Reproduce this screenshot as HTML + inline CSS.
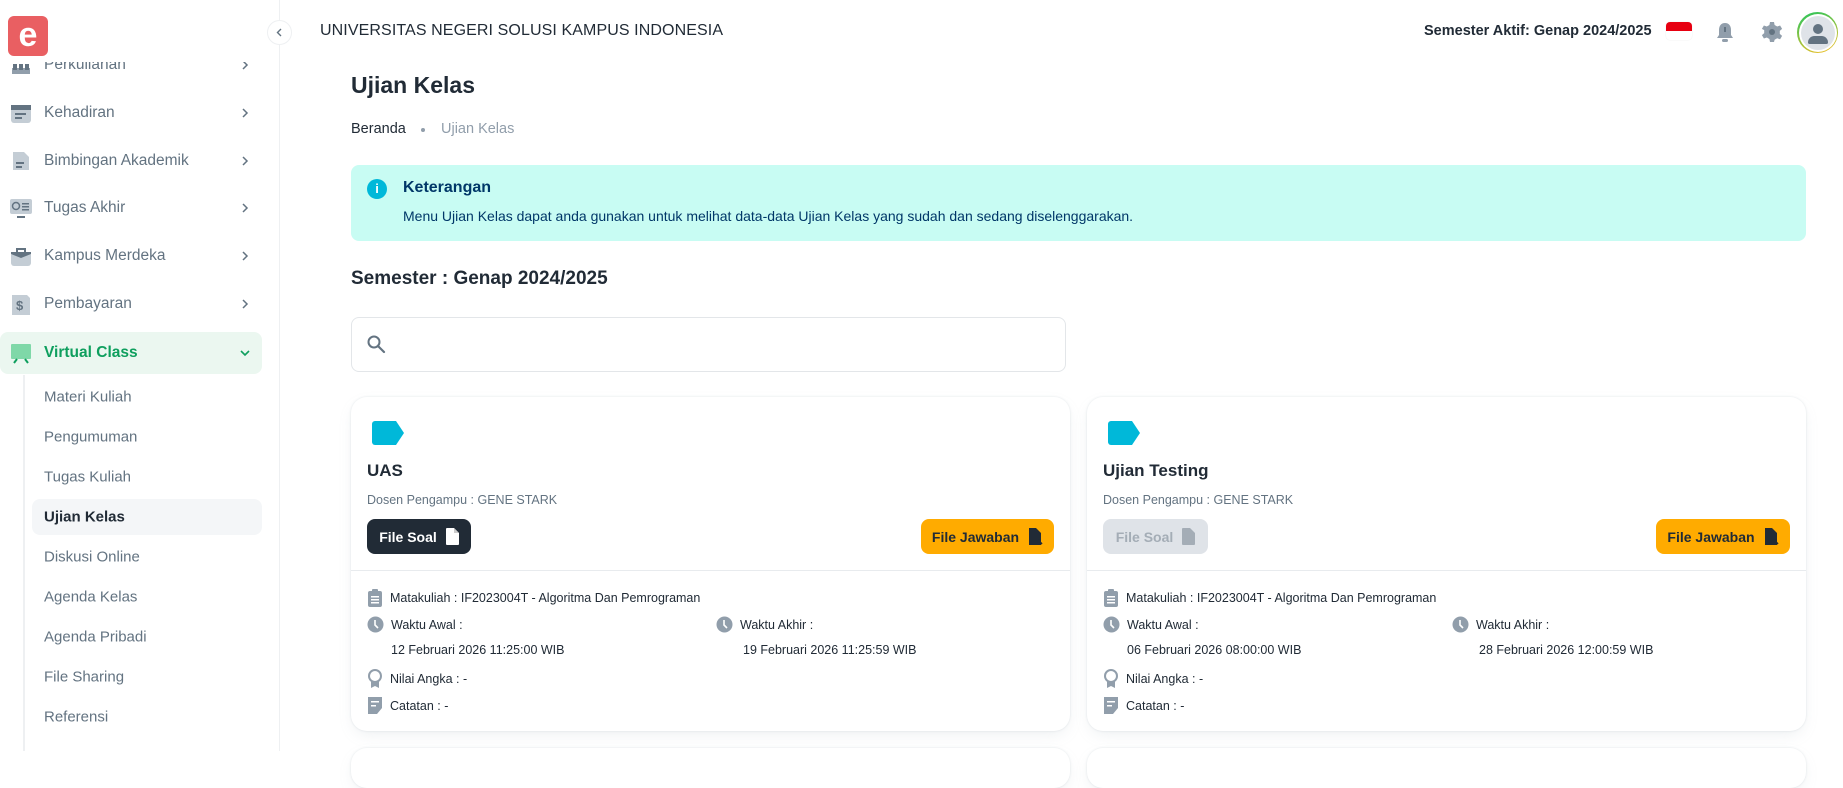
<!DOCTYPE html>
<html><head><meta charset="utf-8">
<style>
*{box-sizing:border-box;margin:0;padding:0}
body{width:1843px;height:751px;overflow:hidden;background:#fff;font-family:"Liberation Sans",sans-serif;color:#212b36;position:relative}
.abs{position:absolute}
.side{position:absolute;left:0;top:0;width:280px;height:751px;border-right:1px solid #eef0f2;background:#fff;overflow:hidden}
.mi{position:absolute;left:0;width:262px;height:42px;display:flex;align-items:center;font-size:15.5px;color:#637381}
.mi .ic{position:absolute;left:10px;top:10px;width:22px;height:22px}
.mi .tx{position:absolute;left:44px}
.mi .ch{position:absolute;left:240px;top:13px;width:10px;height:16px}
.si{position:absolute;left:44px;font-size:15px;color:#637381;transform:translateY(-50%)}
.card{position:absolute;top:397px;width:719px;height:334px;border-radius:16px;background:#fff;box-shadow:0 0 2px rgba(145,158,171,.25),0 6px 16px -4px rgba(145,158,171,.18)}
.tag{position:absolute;left:21px;top:24px}
.ct{position:absolute;left:16px;top:64px;font-size:17px;font-weight:600}
.dp{position:absolute;left:16px;top:96px;font-size:12.5px;color:#637381}
.btn{position:absolute;top:122px;height:35px;border-radius:8px;font-size:14px;font-weight:700;display:flex;align-items:center;justify-content:center;gap:9px}
.hr{position:absolute;left:0;right:0;top:173px;border-top:1px solid #e8ebee}
.row{position:absolute;font-size:12.5px;color:#212b36;display:flex;align-items:center;gap:7px}
</style></head><body>

<div class="side">
  <div class="mi" style="top:44px;"><svg class="ic" viewBox="0 0 22 22"><rect x="2" y="14" width="18" height="6" fill="#919eab"/><rect x="3" y="10" width="4" height="6" fill="#637381"/><rect x="9" y="10" width="4" height="6" fill="#637381"/><rect x="15" y="10" width="4" height="6" fill="#637381"/></svg><span class="tx">Perkuliahan</span><svg class="ch" viewBox="0 0 10 16"><path d="M3 4l4 4-4 4" stroke="#637381" stroke-width="1.5" fill="none"/></svg></div>
  <div class="abs" style="left:0;top:0;width:279px;height:62px;background:#fff"></div>
  <div class="abs" style="left:8px;top:16px;width:40px;height:40px;background:#e95f62;border-radius:6px;color:#fff;font:bold 34px 'Liberation Sans',sans-serif;text-align:center;line-height:38px">e</div>

  <div class="mi" style="top:92px"><svg class="ic" viewBox="0 0 22 22"><rect x="1" y="3" width="20" height="18" rx="3" fill="#c4cdd5"/><rect x="1" y="3" width="20" height="5" fill="#637381"/><rect x="5" y="11" width="11" height="2" fill="#637381"/><rect x="5" y="15" width="7" height="2" fill="#637381"/></svg><span class="tx">Kehadiran</span><svg class="ch" viewBox="0 0 10 16"><path d="M3 4l4 4-4 4" stroke="#637381" stroke-width="1.5" fill="none"/></svg></div>
  <div class="mi" style="top:140px"><svg class="ic" viewBox="0 0 22 22"><path d="M3 2h11l5 5v13H3z" fill="#c4cdd5"/><rect x="6" y="12" width="8" height="2" fill="#637381"/><rect x="6" y="16" width="6" height="2" fill="#637381"/></svg><span class="tx">Bimbingan Akademik</span><svg class="ch" viewBox="0 0 10 16"><path d="M3 4l4 4-4 4" stroke="#637381" stroke-width="1.5" fill="none"/></svg></div>
  <div class="mi" style="top:187px"><svg class="ic" viewBox="0 0 22 22"><rect x="0" y="2" width="22" height="15" rx="2" fill="#c4cdd5"/><circle cx="6" cy="9" r="3.5" fill="none" stroke="#637381" stroke-width="1.5"/><rect x="12" y="6" width="7" height="1.5" fill="#637381"/><rect x="12" y="9" width="7" height="1.5" fill="#637381"/><rect x="12" y="12" width="7" height="1.5" fill="#637381"/><rect x="7" y="19" width="8" height="2" fill="#637381"/></svg><span class="tx">Tugas Akhir</span><svg class="ch" viewBox="0 0 10 16"><path d="M3 4l4 4-4 4" stroke="#637381" stroke-width="1.5" fill="none"/></svg></div>
  <div class="mi" style="top:235px"><svg class="ic" viewBox="0 0 22 22"><rect x="1" y="7" width="20" height="14" rx="3" fill="#c4cdd5"/><path d="M1 9l10 4 10-4V7H1z" fill="#637381"/><path d="M7 7V4h8v3" fill="none" stroke="#637381" stroke-width="2"/></svg><span class="tx">Kampus Merdeka</span><svg class="ch" viewBox="0 0 10 16"><path d="M3 4l4 4-4 4" stroke="#637381" stroke-width="1.5" fill="none"/></svg></div>
  <div class="mi" style="top:283px"><svg class="ic" viewBox="0 0 22 22"><path d="M2 2h15l3 3v17H2z" fill="#c4cdd5"/><text x="6" y="17" font-size="13" font-weight="bold" fill="#637381" font-family="Liberation Sans">$</text></svg><span class="tx">Pembayaran</span><svg class="ch" viewBox="0 0 10 16"><path d="M3 4l4 4-4 4" stroke="#637381" stroke-width="1.5" fill="none"/></svg></div>
  <div class="mi" style="top:332px;background:#ebf7f0;border-radius:8px;color:#0e9f5e;font-weight:600"><svg class="ic" viewBox="0 0 22 22"><rect x="1" y="2" width="20" height="15" rx="1" fill="#7fd8a8"/><path d="M4 21l3-4M18 21l-3-4" stroke="#0e9f5e" stroke-width="2"/></svg><span class="tx">Virtual Class</span><svg class="ch" style="left:238px;width:14px" viewBox="0 0 14 16"><path d="M3 6l4 4 4-4" stroke="#0e9f5e" stroke-width="1.6" fill="none"/></svg></div>

  <div class="abs" style="left:23px;top:375px;width:2px;height:376px;background:#eef0f2"></div>
  <div class="abs" style="left:32px;top:499px;width:230px;height:36px;background:#f4f6f8;border-radius:8px"></div>
  <div class="si" style="top:397px">Materi Kuliah</div>
  <div class="si" style="top:437px">Pengumuman</div>
  <div class="si" style="top:477px">Tugas Kuliah</div>
  <div class="si" style="top:517px;color:#212b36;font-weight:600">Ujian Kelas</div>
  <div class="si" style="top:557px">Diskusi Online</div>
  <div class="si" style="top:597px">Agenda Kelas</div>
  <div class="si" style="top:637px">Agenda Pribadi</div>
  <div class="si" style="top:677px">File Sharing</div>
  <div class="si" style="top:717px">Referensi</div>
</div>
<div class="abs" style="left:267px;top:20px;width:25px;height:25px;border:1px solid #eef0f2;border-radius:50%;background:#fff"><svg width="23" height="23" viewBox="0 0 23 23"><path d="M13 8l-3.5 3.5L13 15" stroke="#637381" stroke-width="1.4" fill="none"/></svg></div>

<div class="abs" style="left:320px;top:22px;font-size:16px;font-weight:500;letter-spacing:.1px">UNIVERSITAS NEGERI SOLUSI KAMPUS INDONESIA</div>
<div class="abs" style="left:1424px;top:23px;font-size:14.5px;font-weight:600">Semester Aktif: Genap 2024/2025</div>
<div class="abs" style="left:1666px;top:22px;width:26px;height:18px;border-radius:4px;overflow:hidden;box-shadow:0 0 1px #ddd"><div style="height:9px;background:#e70011"></div></div>
<svg class="abs" style="left:1714px;top:21px" width="22" height="22" viewBox="0 0 22 22"><path d="M11 2c4 0 6 3 6 7v5l2 3H3l2-3V9c0-4 2-7 6-7z" fill="#919eab"/><rect x="10" y="6" width="2" height="5" fill="#637381"/><rect x="8" y="18" width="6" height="3" rx="1.5" fill="#919eab"/></svg>
<svg class="abs" style="left:1761px;top:21px" width="22" height="22" viewBox="0 0 22 22"><path d="M9 1h4l.6 3 2.6 1.5 2.9-1 2 3.4-2.3 2v3l2.3 2-2 3.4-2.9-1-2.6 1.5L13 21H9l-.6-3-2.6-1.5-2.9 1-2-3.4 2.3-2v-3L.9 7.9l2-3.4 2.9 1L8.4 4z" fill="#919eab"/><circle cx="11" cy="11" r="3" fill="#637381"/></svg>
<div class="abs" style="left:1797px;top:12px;width:41px;height:41px;border-radius:50%;background:linear-gradient(160deg,#22c55e,#fbbf24);padding:1.5px"><div style="width:100%;height:100%;border-radius:50%;background:#fff;padding:2px"><div style="width:100%;height:100%;border-radius:50%;background:#dfe3e8;position:relative"><div class="abs" style="left:12px;top:8px;width:10px;height:10px;border-radius:50%;background:#637381"></div><div class="abs" style="left:7px;top:20px;width:20px;height:8px;border-radius:8px 8px 2px 2px;background:#637381"></div></div></div></div>

<div class="abs" style="left:351px;top:72px;font-size:23px;font-weight:700">Ujian Kelas</div>
<div class="abs" style="left:351px;top:121px;font-size:14.5px">Beranda</div>
<div class="abs" style="left:421px;top:128px;width:4px;height:4px;border-radius:50%;background:#919eab"></div>
<div class="abs" style="left:441px;top:121px;font-size:14.5px;color:#919eab">Ujian Kelas</div>

<div class="abs" style="left:351px;top:165px;width:1455px;height:76px;background:#c8fcf3;border-radius:8px"></div>
<div class="abs" style="left:367px;top:179px;width:20px;height:20px;border-radius:50%;background:#00b8d9;color:#fff;font-size:13px;font-weight:700;text-align:center;line-height:20px">i</div>
<div class="abs" style="left:403px;top:179px;font-size:16px;font-weight:600;color:#003768">Keterangan</div>
<div class="abs" style="left:403px;top:208px;font-size:14px;color:#003768">Menu Ujian Kelas dapat anda gunakan untuk melihat data-data Ujian Kelas yang sudah dan sedang diselenggarakan.</div>

<div class="abs" style="left:351px;top:268px;font-size:19px;font-weight:600">Semester : Genap 2024/2025</div>

<div class="abs" style="left:351px;top:317px;width:715px;height:55px;border:1px solid #e3e6e9;border-radius:8px"></div>
<svg class="abs" style="left:366px;top:334px" width="20" height="20" viewBox="0 0 20 20"><circle cx="8" cy="8" r="5.5" fill="none" stroke="#637381" stroke-width="2"/><path d="M12 12l6 6" stroke="#637381" stroke-width="2.2" stroke-linecap="round"/></svg>

<!-- card 1 -->
<div class="card" style="left:351px">
  <svg class="tag" width="32" height="24" viewBox="0 0 32 24"><path d="M3 0h21l8 12-8 12H3a3 3 0 0 1-3-3V3a3 3 0 0 1 3-3z" fill="#00b8d9"/></svg>
  <div class="ct">UAS</div>
  <div class="dp">Dosen Pengampu : GENE STARK</div>
  <div class="btn" style="left:16px;width:104px;background:#212b36;color:#fff">File Soal <svg width="13" height="17" viewBox="0 0 13 17"><path d="M1 0h7l5 5v11a1 1 0 0 1-1 1H1a1 1 0 0 1-1-1V1a1 1 0 0 1 1-1z" fill="#fff"/><path d="M8 0v5h5" fill="#ccc"/></svg></div>
  <div class="btn" style="left:570px;width:133px;background:#ffab00;color:#212b36">File Jawaban <svg width="15" height="18" viewBox="0 0 15 18"><path d="M1 0h7l5 5v12H1z" fill="#212b36"/><path d="M10 12l4 4M10 12v3M10 12h3" stroke="#212b36" stroke-width="1.6" fill="none"/></svg></div>
  <div class="hr"></div>
  <div class="row" style="left:16px;top:192px"><svg width="16" height="18" viewBox="0 0 16 18"><rect x="1" y="2" width="14" height="16" rx="2" fill="#919eab"/><rect x="5" y="0" width="6" height="4" rx="1" fill="#919eab"/><rect x="4" y="7" width="8" height="1.5" fill="#fff"/><rect x="4" y="10" width="8" height="1.5" fill="#fff"/><rect x="4" y="13" width="8" height="1.5" fill="#fff"/></svg>Matakuliah : IF2023004T - Algoritma Dan Pemrograman</div>
  <div class="row" style="left:16px;top:219px"><svg width="17" height="17" viewBox="0 0 17 17"><circle cx="8.5" cy="8.5" r="8" fill="#919eab"/><path d="M8 4v5l3 3" stroke="#fff" stroke-width="1.6" fill="none"/></svg>Waktu Awal :</div>
  <div class="row" style="left:40px;top:246px">12 Februari 2026 11:25:00 WIB</div>
  <div class="row" style="left:365px;top:219px"><svg width="17" height="17" viewBox="0 0 17 17"><circle cx="8.5" cy="8.5" r="8" fill="#919eab"/><path d="M8 4v5l3 3" stroke="#fff" stroke-width="1.6" fill="none"/></svg>Waktu Akhir :</div>
  <div class="row" style="left:392px;top:246px">19 Februari 2026 11:25:59 WIB</div>
  <div class="row" style="left:16px;top:272px"><svg width="16" height="19" viewBox="0 0 16 19"><circle cx="8" cy="7" r="6" fill="none" stroke="#919eab" stroke-width="2"/><path d="M4 12v7l4-2 4 2v-7" fill="#919eab"/></svg>Nilai Angka : -</div>
  <div class="row" style="left:16px;top:300px"><svg width="16" height="17" viewBox="0 0 16 17"><path d="M1 0h14v11l-5 6H1z" fill="#919eab"/><rect x="4" y="4" width="8" height="1.5" fill="#fff"/><rect x="4" y="8" width="5" height="1.5" fill="#fff"/></svg>Catatan : -</div>
</div>

<!-- card 2 -->
<div class="card" style="left:1087px">
  <svg class="tag" width="32" height="24" viewBox="0 0 32 24"><path d="M3 0h21l8 12-8 12H3a3 3 0 0 1-3-3V3a3 3 0 0 1 3-3z" fill="#00b8d9"/></svg>
  <div class="ct">Ujian Testing</div>
  <div class="dp">Dosen Pengampu : GENE STARK</div>
  <div class="btn" style="left:16px;width:105px;background:#dfe3e8;color:#a4adb6">File Soal <svg width="13" height="17" viewBox="0 0 13 17"><path d="M1 0h7l5 5v11a1 1 0 0 1-1 1H1a1 1 0 0 1-1-1V1a1 1 0 0 1 1-1z" fill="#a4adb6"/></svg></div>
  <div class="btn" style="left:569px;width:134px;background:#ffab00;color:#212b36">File Jawaban <svg width="15" height="18" viewBox="0 0 15 18"><path d="M1 0h7l5 5v12H1z" fill="#212b36"/><path d="M10 12l4 4M10 12v3M10 12h3" stroke="#212b36" stroke-width="1.6" fill="none"/></svg></div>
  <div class="hr"></div>
  <div class="row" style="left:16px;top:192px"><svg width="16" height="18" viewBox="0 0 16 18"><rect x="1" y="2" width="14" height="16" rx="2" fill="#919eab"/><rect x="5" y="0" width="6" height="4" rx="1" fill="#919eab"/><rect x="4" y="7" width="8" height="1.5" fill="#fff"/><rect x="4" y="10" width="8" height="1.5" fill="#fff"/><rect x="4" y="13" width="8" height="1.5" fill="#fff"/></svg>Matakuliah : IF2023004T - Algoritma Dan Pemrograman</div>
  <div class="row" style="left:16px;top:219px"><svg width="17" height="17" viewBox="0 0 17 17"><circle cx="8.5" cy="8.5" r="8" fill="#919eab"/><path d="M8 4v5l3 3" stroke="#fff" stroke-width="1.6" fill="none"/></svg>Waktu Awal :</div>
  <div class="row" style="left:40px;top:246px">06 Februari 2026 08:00:00 WIB</div>
  <div class="row" style="left:365px;top:219px"><svg width="17" height="17" viewBox="0 0 17 17"><circle cx="8.5" cy="8.5" r="8" fill="#919eab"/><path d="M8 4v5l3 3" stroke="#fff" stroke-width="1.6" fill="none"/></svg>Waktu Akhir :</div>
  <div class="row" style="left:392px;top:246px">28 Februari 2026 12:00:59 WIB</div>
  <div class="row" style="left:16px;top:272px"><svg width="16" height="19" viewBox="0 0 16 19"><circle cx="8" cy="7" r="6" fill="none" stroke="#919eab" stroke-width="2"/><path d="M4 12v7l4-2 4 2v-7" fill="#919eab"/></svg>Nilai Angka : -</div>
  <div class="row" style="left:16px;top:300px"><svg width="16" height="17" viewBox="0 0 16 17"><path d="M1 0h14v11l-5 6H1z" fill="#919eab"/><rect x="4" y="4" width="8" height="1.5" fill="#fff"/><rect x="4" y="8" width="5" height="1.5" fill="#fff"/></svg>Catatan : -</div>
</div>

<div class="card" style="left:351px;top:748px;height:40px"></div>
<div class="card" style="left:1087px;top:748px;height:40px"></div>
</body></html>
